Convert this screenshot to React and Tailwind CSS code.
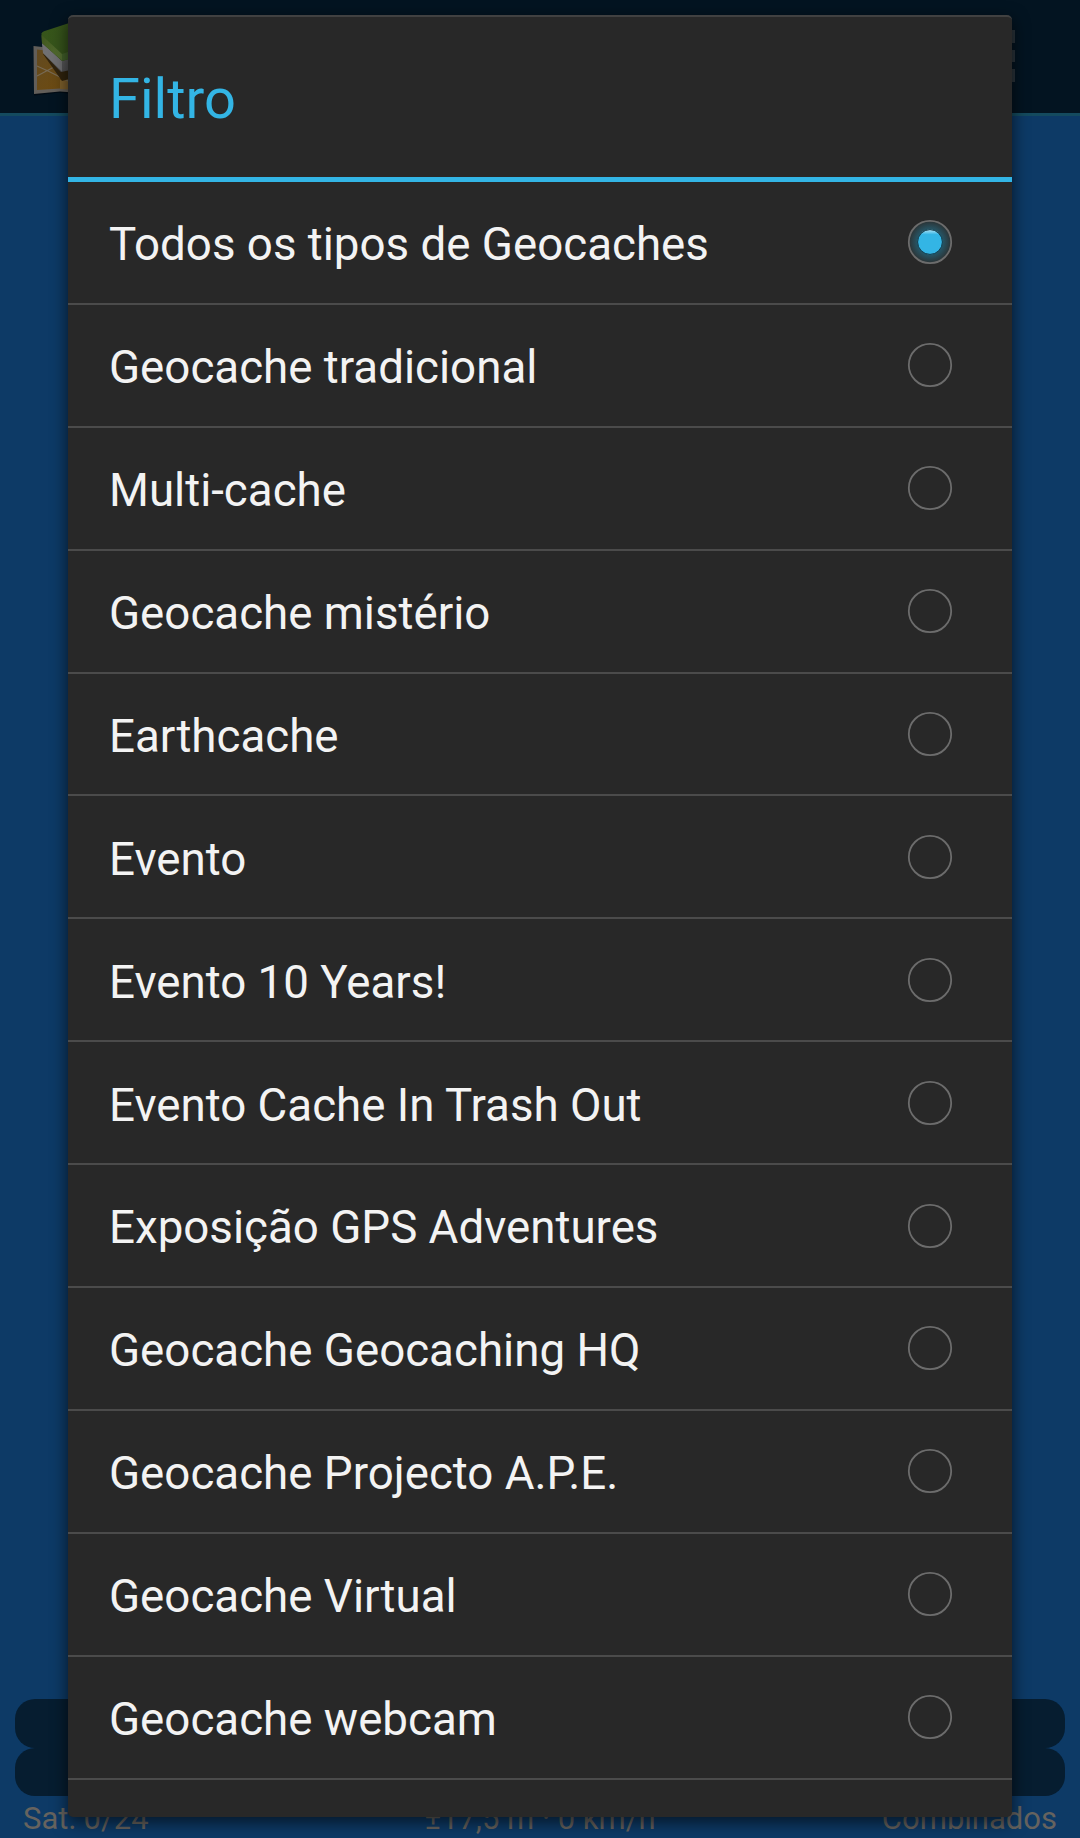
const TYPES = [
  'Todos os tipos de Geocaches',
  'Geocache tradicional',
  'Multi-cache',
  'Geocache mistério',
  'Earthcache',
  'Evento',
  'Evento 10 Years!',
  'Evento Cache In Trash Out',
  'Exposição GPS Adventures',
  'Geocache Geocaching HQ',
  'Geocache Projecto A.P.E.',
  'Geocache Virtual',
  'Geocache webcam',
];

function AppLogo() {
  return (
    <svg className="ml-8 mt-5 block" width="76" height="80" viewBox="32 20 76 80">
      <defs>
        <linearGradient id="cover" x1="0" y1="0" x2="1" y2="1">
          <stop offset="0" stopColor="#37561a" />
          <stop offset="1" stopColor="#35521c" />
        </linearGradient>
        <linearGradient id="spine" x1="0" y1="0" x2="1" y2="0.6">
          <stop offset="0" stopColor="#3f561d" />
          <stop offset="1" stopColor="#546d30" />
        </linearGradient>
        <linearGradient id="map" x1="0" y1="0" x2="1" y2="1">
          <stop offset="0" stopColor="#624a21" />
          <stop offset="1" stopColor="#704b0c" />
        </linearGradient>
        <linearGradient id="pages" x1="0" y1="0" x2="0" y2="1">
          <stop offset="0" stopColor="#626263" />
          <stop offset="1" stopColor="#505052" />
        </linearGradient>
      </defs>
      <path d="M34 94.5 60 91.5 80 94" stroke="#020b14" strokeWidth="2" fill="none" />
      <path d="M33.5 46 60 49 80 46V93L60 91.5 34 94Z" fill="#625e59" />
      <path d="M37 49.5 60 52 80 50V88L60 88.5 37 90Z" fill="url(#map)" />
      <path d="M60 80 80 76V90L60 89Z" fill="#7d5f2b" />
      <path d="M37 66 48 71 70 82M37 76 54 67" stroke="#776a55" strokeWidth="1.2" fill="none" />
      <path d="M43 54 62 81 80 76V62Z" fill="#30230d" />
      <path d="M42 43 62 61 80 54V68L61 72 44 54Z" fill="url(#pages)" />
      <path d="M42 43 62 60.500V71.500L43 53Z" fill="#707072" />
      <path d="M41.500 33.500Q42 32 44 31.200L80 19.500V56L62 61 42 43Z" fill="url(#cover)" />
      <path d="M41.500 35 62 54V60.500L42 43Z" fill="url(#spine)" />
      <path d="M62 54 80 48V56L62 61Z" fill="#42602a" />
    </svg>
  );
}

function Radio({ checked }) {
  return (
    <svg className="block shrink-0" width="48" height="48" viewBox="0 0 48 48">
      <defs>
        <radialGradient id="glow">
          <stop offset="0.5" stopColor="#235e72" />
          <stop offset="0.72" stopColor="#284b57" />
          <stop offset="1" stopColor="#2b3335" />
        </radialGradient>
        <linearGradient id="dot" x1="0" y1="0" x2="0" y2="1">
          <stop offset="0" stopColor="#b5e6f8" />
          <stop offset="0.2" stopColor="#33b5e5" />
        </linearGradient>
      </defs>
      {checked && <circle cx="24" cy="24" r="21" fill="url(#glow)" />}
      <circle cx="24" cy="24" r="21.2" fill="none" stroke="#6c6c6c" strokeWidth="1.8" />
      {checked && <circle cx="24" cy="24" r="12.4" fill="url(#dot)" stroke="#143b49" strokeWidth="1" />}
    </svg>
  );
}

export default function App() {
  return (
    <div className="relative flex h-[1838px] w-[1080px] flex-col overflow-hidden bg-[#0d3a66] font-['Roboto',sans-serif]">
      <header className="flex h-[116px] shrink-0 items-start justify-between border-b-[3px] border-[#144a5e] bg-[#031421]">
        <AppLogo />
        <div className="mr-[65px] mt-[30px] flex flex-col gap-[7px]">
          <div className="h-[12.5px] w-3 bg-[#2a343b]" />
          <div className="h-[12.5px] w-3 bg-[#2a343b]" />
          <div className="h-[12.5px] w-3 bg-[#2a343b]" />
        </div>
      </header>
      <main className="flex grow flex-col justify-end px-[15px]">
        <div className="h-[49px] rounded-[20px] bg-[#061d30]" />
        <div className="h-[48px] rounded-[20px] bg-[#061d30]" />
      </main>
      <footer className="grid h-[42px] shrink-0 grid-cols-3 items-center px-[23px] pt-[2px] text-[31px] leading-none text-[#66635f]">
        <span>Sat: 0/24</span>
        <span className="text-center">±17,5 m · 0 km/h</span>
        <span className="text-right">Combinados</span>
      </footer>

      <section className="absolute left-[68px] top-[15px] flex h-[1802px] w-[944px] flex-col overflow-hidden rounded-[5px] border-t-2 border-[#414141] bg-[#282828] shadow-[0_5px_16px_1px_rgba(0,0,0,0.6)]">
        <div className="flex h-[160px] shrink-0 items-center pl-[41px] pt-[4px]">
          <h1 className="text-[56px] leading-none text-[#33b5e5]">Filtro</h1>
        </div>
        <div className="h-[5px] shrink-0 bg-[#33b5e5]" />
        <ul>
          {TYPES.map((type, i) => (
            <li key={type} className="flex h-[122.9px] flex-col">
              <div className="flex grow items-center justify-between pl-[41px] pr-[58px]">
                <span className="pt-[5.5px] text-[45.7px] leading-none text-[#f3f3f3]">{type}</span>
                <Radio checked={i === 0} />
              </div>
              <div className="h-[2px] shrink-0 bg-[#4b4b4b]" />
            </li>
          ))}
        </ul>
      </section>
    </div>
  );
}
